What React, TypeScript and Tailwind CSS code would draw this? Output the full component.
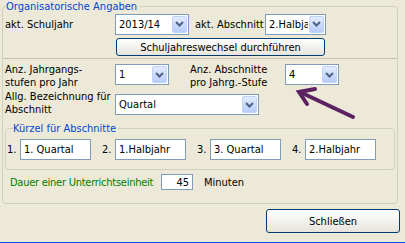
const FONT = "font-['DejaVu_Sans_Condensed','Liberation_Sans',sans-serif] text-[11px] leading-[13px]";

function Chevron() {
  return (
    <svg width="9" height="6" viewBox="0 0 9 6" aria-hidden>
      <path d="M1 1 L4.5 4.5 L8 1" fill="none" stroke="#4D6185" strokeWidth="2" />
    </svg>
  );
}

function Combo({ value, className }: { value: string; className: string }) {
  return (
    <div
      className={`flex h-[21px] items-center border border-[#7F9DB9] bg-white pl-[3px] ${className}`}
    >
      <span className="flex-1 overflow-hidden whitespace-nowrap">{value}</span>
      <span className="m-px flex h-[17px] w-[15px] shrink-0 items-center justify-center rounded-[2px] border border-[#C0D2F8] bg-gradient-to-b from-[#E3ECFE] to-[#B7CCF8]">
        <Chevron />
      </span>
    </div>
  );
}

function TextBox({ value, className }: { value: string; className: string }) {
  return (
    <div className={`flex items-center border border-[#7F9DB9] bg-white px-[3px] ${className}`}>
      {value}
    </div>
  );
}

const KUERZEL = ["1. Quartal", "1.Halbjahr", "3. Quartal", "2.Halbjahr"];

export default function App() {
  return (
    <div className={`relative h-[243px] w-[405px] border-b border-[#0054E3] bg-[#ECE9D8] text-black ${FONT}`}>
      <fieldset className="ml-[2px] w-[396px] rounded-[4px] border border-[#D0D0BF] px-[2px] pb-[13px]">
        <legend className="ml-[1px] pr-[2px] text-[#0046D5]">Organisatorische Angaben</legend>

        <div className="flex h-[22px] items-center">
          <span className="w-[110px]">akt. Schuljahr</span>
          <Combo value="2013/14" className="w-[74px]" />
          <span className="ml-[6px] w-[70px]">akt. Abschnitt</span>
          <Combo value="2.Halbjahr" className="w-[61px]" />
        </div>

        <button
          type="button"
          className="ml-[111px] mt-[3px] flex h-[18px] w-[209px] items-center justify-center rounded-[3px] border border-[#003C74] bg-gradient-to-b from-white to-[#E6E4DC]"
        >
          Schuljahreswechsel durchführen
        </button>

        <div className="-mx-[2px] mt-[2px] border-t border-[#C5C2B2]" />

        <div className="mt-[4px] flex h-[24px] items-start">
          <span className="w-[110px]">
            Anz. Jahrgangs-
            <br />
            stufen pro Jahr
          </span>
          <Combo value="1" className="mt-px w-[54px]" />
          <span className="ml-[21px] w-[95px]">
            Anz. Abschnitte
            <br />
            pro Jahrg.-Stufe
          </span>
          <Combo value="4" className="mt-px w-[54px]" />
        </div>

        <div className="mt-[3px] flex h-[26px] items-start">
          <span className="w-[110px]">
            Allg. Bezeichnung für
            <br />
            Abschnitt
          </span>
          <Combo value="Quartal" className="mt-[4px] w-[144px]" />
        </div>

        <fieldset className="mt-[6px] rounded-[4px] border border-[#D0D0BF] px-px pb-[9px]">
          <legend className="ml-[6px] pr-[2px] text-[#0046D5]">Kürzel für Abschnitte</legend>
          <div className="mt-[4px] flex h-[21px] items-center gap-[11px]">
            {KUERZEL.map((k, i) => (
              <div key={i} className="flex items-center">
                <span className="w-[13px]">{i + 1}.</span>
                <TextBox value={k} className="h-[21px] w-[71px]" />
              </div>
            ))}
          </div>
        </fieldset>

        <div className="mt-[4px] flex h-[16px] items-center">
          <span className="ml-[5px] w-[151px] whitespace-nowrap tracking-[-0.25px] text-[#008000]">
            Dauer einer Unterrichtseinheit
          </span>
          <TextBox value="45" className="h-[16px] w-[32px] justify-end" />
          <span className="ml-[11px]">Minuten</span>
        </div>
      </fieldset>

      <button
        type="button"
        className="ml-[266px] mt-[5px] flex h-[24px] w-[134px] items-center justify-center rounded-[3px] border border-[#003C74] bg-gradient-to-b from-white to-[#E6E4DC]"
      >
        Schließen
      </button>

      <svg className="absolute left-0 top-0" width="405" height="243" aria-hidden>
        <g stroke="#5C2160" strokeWidth="4" strokeLinecap="round" fill="none">
          <path d="M353 117 L300 92" />
          <path d="M315 89 L299 92 L307 104" />
        </g>
      </svg>
    </div>
  );
}
